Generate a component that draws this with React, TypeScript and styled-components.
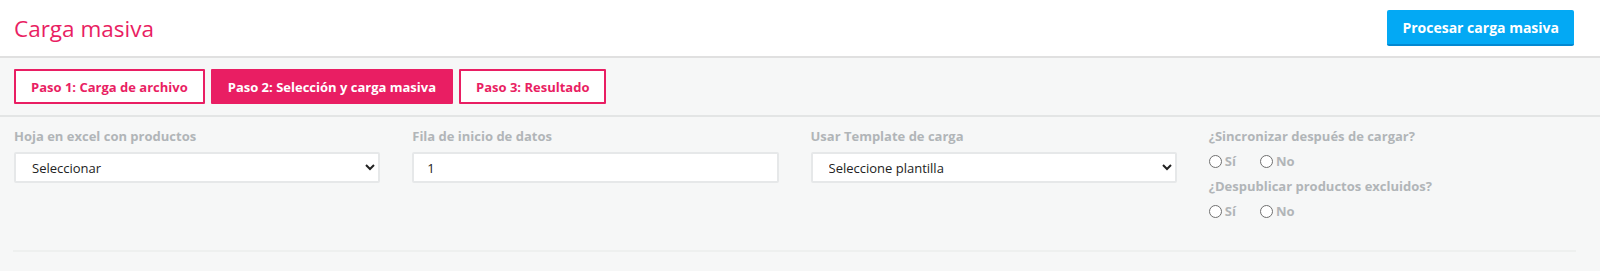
import React from 'react';
import styled, { createGlobalStyle } from 'styled-components';

const GlobalStyle = createGlobalStyle`
  body {
    margin: 0;
    background: #f6f7f7;
    font-family: 'Open Sans', 'Noto Sans', sans-serif;
  }
`;

const Header = styled.header`
  display: flex;
  align-items: center;
  justify-content: space-between;
  height: 56px;
  padding: 0 26px 0 14px;
  background: #fff;
  border-bottom: 2px solid #e0e0e0;
`;

const Title = styled.h1`
  margin: 0;
  font-size: 22.5px;
  font-weight: 400;
  color: #e91e63;
`;

const PrimaryButton = styled.button`
  height: 36px;
  padding: 0 15px;
  border: none;
  border-bottom: 2px solid #0288d1;
  border-radius: 2px;
  background: #03a9f4;
  color: #fff;
  font-family: inherit;
  font-size: 14px;
  font-weight: 700;
  cursor: pointer;
`;

const TabBar = styled.nav`
  display: flex;
  gap: 6px;
  padding: 11px 14px;
  border-bottom: 2px solid #e3e5e5;
`;

const Tab = styled.button<{ $active?: boolean }>`
  height: 35px;
  padding: 0 15px;
  border: 2px solid #e91e63;
  border-radius: 1px;
  background: ${p => (p.$active ? '#e91e63' : '#fff')};
  color: ${p => (p.$active ? '#fff' : '#e91e63')};
  font-family: inherit;
  font-size: 13px;
  font-weight: 700;
  cursor: pointer;
`;

const Form = styled.section`
  padding: 10px 25px 0 14px;
`;

const Grid = styled.div`
  display: grid;
  grid-template-columns: repeat(4, 1fr);
  column-gap: 32px;
`;

const Field = styled.div`
  display: flex;
  flex-direction: column;
`;

const Label = styled.label`
  font-size: 13px;
  line-height: 18px;
  font-weight: 700;
  color: #b1b5b8;
`;

const Select = styled.select`
  margin-top: 7px;
  height: 31px;
  padding: 0 12px;
  border: 2px solid #e6e8e9;
  border-radius: 2px;
  background: #fff;
  color: #222;
  font-family: inherit;
  font-size: 13px;
`;

const Input = styled.input`
  margin-top: 7px;
  height: 31px;
  box-sizing: border-box;
  padding: 0 13px;
  border: 2px solid #e6e8e9;
  border-radius: 2px;
  background: #fff;
  color: #222;
  font-family: inherit;
  font-size: 13px;
`;

const RadioRow = styled.div`
  display: flex;
  gap: 24px;
  margin: 7px 0 7px;
`;

const RadioOption = styled.label`
  display: flex;
  align-items: center;
  gap: 3px;
  font-size: 13px;
  line-height: 18px;
  font-weight: 700;
  color: #b1b5b8;
`;

const Circle = styled.span`
  width: 11px;
  height: 11px;
  border: 1px solid #6f6f6f;
  border-radius: 50%;
  background: #fff;
  margin-top: 1px;
`;

const Divider = styled.hr`
  margin: 23px -1px 0;
  border: none;
  border-top: 2px solid #eef0ef;
`;

const Radio = ({ label }: { label: string }) => (
  <RadioOption>
    <Circle />
    {label}
  </RadioOption>
);

const App = () => (
  <>
    <GlobalStyle />
    <Header>
      <Title>Carga masiva</Title>
      <PrimaryButton>Procesar carga masiva</PrimaryButton>
    </Header>
    <TabBar>
      <Tab>Paso 1: Carga de archivo</Tab>
      <Tab $active>Paso 2: Selección y carga masiva</Tab>
      <Tab>Paso 3: Resultado</Tab>
    </TabBar>
    <Form>
      <Grid>
        <Field>
          <Label>Hoja en excel con productos</Label>
          <Select defaultValue="">
            <option value="">Seleccionar</option>
          </Select>
        </Field>
        <Field>
          <Label>Fila de inicio de datos</Label>
          <Input defaultValue="1" />
        </Field>
        <Field>
          <Label>Usar Template de carga</Label>
          <Select defaultValue="">
            <option value="">Seleccione plantilla</option>
          </Select>
        </Field>
        <Field>
          <Label>¿Sincronizar después de cargar?</Label>
          <RadioRow>
            <Radio label="Sí" />
            <Radio label="No" />
          </RadioRow>
          <Label>¿Despublicar productos excluidos?</Label>
          <RadioRow>
            <Radio label="Sí" />
            <Radio label="No" />
          </RadioRow>
        </Field>
      </Grid>
      <Divider />
    </Form>
  </>
);

export default App;
